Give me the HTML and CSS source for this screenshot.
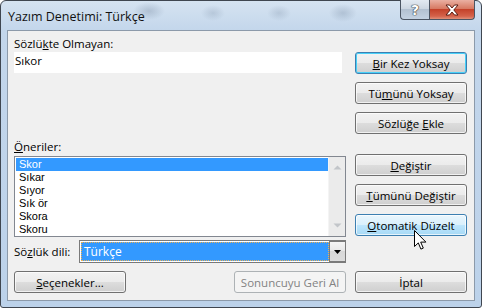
FILE: index.html
```html
<!DOCTYPE html>
<html lang="tr">
<head>
<meta charset="utf-8">
<title>Yazım Denetimi: Türkçe</title>
<link rel="stylesheet" href="styles.css">
</head>
<body>
<div class="window">
  <div class="titlebar">
    <span class="title">Yazım Denetimi: Türkçe</span>
    <div class="caption-btns">
      <div class="cap help">?</div>
      <div class="cap close">
        <svg width="16" height="12" viewBox="0 0 16 12"><path d="M2 1h3.5L8 4l2.5-3H14l-4.2 5 4.2 5h-3.5L8 8l-2.5 3H2l4.2-5z" fill="#fff" stroke="#5a1d12" stroke-width="1" stroke-linejoin="round"/></svg>
      </div>
    </div>
  </div>
  <div class="client">
    <div class="main">
      <div class="left">
        <div class="label">Sözlü<u>k</u>te Olmayan:</div>
        <div class="notin">Sıkor</div>
        <div class="label sugg-label"><u>Ö</u>neriler:</div>
        <div class="listbox">
          <ul class="items">
            <li class="sel">Skor</li>
            <li>Sıkar</li>
            <li>Sıyor</li>
            <li>Sık ör</li>
            <li>Skora</li>
            <li>Skoru</li>
          </ul>
          <div class="vscroll">
            <svg width="9" height="5" viewBox="0 0 9 5"><path d="M0.5 4.5L4.5 0.5 8.5 4.5z" fill="#c2c5c9"/></svg>
            <svg width="9" height="5" viewBox="0 0 9 5"><path d="M0.5 0.5L4.5 4.5 8.5 0.5z" fill="#c2c5c9"/></svg>
          </div>
        </div>
        <div class="langrow">
          <span class="label">Sö<u>z</u>lük dili:</span>
          <div class="combo">
            <div class="combo-field"><span class="combo-text">Türkçe</span></div>
            <div class="combo-btn"><svg width="7" height="4" viewBox="0 0 7 4"><path d="M0 0h7L3.5 4z" fill="#000"/></svg></div>
          </div>
        </div>
      </div>
      <div class="right">
        <button class="btn default"><u>B</u>ir Kez Yoksay</button>
        <button class="btn">Tü<u>m</u>ünü Yoksay</button>
        <button class="btn">Sözlüğe <u>E</u>kle</button>
        <button class="btn gap-top"><u>D</u>eğiştir</button>
        <button class="btn"><u>T</u>ümünü Değiştir</button>
        <button class="btn hover"><u>O</u>tomatik Düzelt</button>
      </div>
    </div>
    <div class="bottom">
      <div class="bottom-left">
        <button class="btn"><u>S</u>eçenekler...</button>
        <button class="btn" disabled>Sonuncuyu Geri Al</button>
      </div>
      <button class="btn">İptal</button>
    </div>
  </div>
  <svg class="cursor" width="13" height="21" viewBox="0 0 13 21"><path d="M0.5 0.5v16l3.8-3.6 2.6 6.2 2.4-1-2.6-6h5.2z" fill="#fff" stroke="#000" stroke-width="1" stroke-linejoin="round"/></svg>
</div>
</body>
</html>
```

FILE: styles.css
```css
* { box-sizing: border-box; }
html, body { margin: 0; padding: 0; }
body {
  width: 482px;
  height: 308px;
  overflow: hidden;
  background: #fff;
  font-family: "Open Sans", "Noto Sans", sans-serif;
  font-size: 11.5px;
  color: #000;
}
u { text-decoration: underline; text-underline-offset: 1px; }

.window {
  position: relative;
  width: 482px;
  height: 308px;
  border: 1px solid #3f4650;
  border-radius: 6px 6px 3px 3px;
  background:
    radial-gradient(ellipse 16px 9px at 148px 10px, rgba(100,120,145,0.3), transparent),
    radial-gradient(ellipse 12px 8px at 212px 12px, rgba(100,120,145,0.22), transparent),
    radial-gradient(ellipse 12px 8px at 278px 12px, rgba(100,120,145,0.22), transparent),
    radial-gradient(ellipse 14px 9px at 342px 12px, rgba(100,120,145,0.28), transparent),
    linear-gradient(#d5e3f1, #c3d6eb 30px, #bcd2ea);
  display: flex;
  flex-direction: column;
}

.titlebar {
  height: 29px;
  display: flex;
  align-items: flex-start;
}
.title {
  padding: 7px 0 0 7px;
  font-size: 12.5px;
  color: #111;
}
.caption-btns {
  margin-left: auto;
  margin-right: 6px;
  margin-top: -1px;
  display: flex;
  height: 20px;
}
.cap {
  height: 20px;
  border: 1px solid #4b5563;
  border-top: none;
  display: flex;
  align-items: center;
  justify-content: center;
}
.help {
  width: 29px;
  border-radius: 0 0 0 4px;
  border-right: none;
  background: linear-gradient(#e3eaf2, #cdd7e2 45%, #b3c1d1 50%, #c4d2e2);
  color: #fff;
  font-weight: bold;
  font-size: 14px;
  font-family: "DejaVu Sans", sans-serif;
  text-shadow: 0 0 1px #333, 0 0 1px #333, 0 0 1px #333;
}
.close {
  width: 46px;
  border-radius: 0 0 4px 0;
  background: linear-gradient(#eab0a2, #d77a63 45%, #c4422a 50%, #d5624a 85%, #e0917a);
}

.client {
  margin-left: 6px;
  width: 468px;
  height: 271px;
  border: 1px solid #8c9aaa;
  background: #f0f0f0;
  padding: 5px 6px 0 6px;
  display: flex;
  flex-direction: column;
}

.main {
  display: grid;
  grid-template-columns: 332px 112px;
  column-gap: 9px;
  align-items: start;
}

.left { display: flex; flex-direction: column; }
.label { height: 16px; line-height: 16px; white-space: nowrap; }
.notin {
  height: 21px;
  width: 328px;
  background: #fff;
  line-height: 18px;
  padding-left: 1px;
}
.sugg-label { margin-top: 66px; }

.listbox {
  margin-top: 1px;
  height: 81px;
  border: 1px solid #828790;
  background: #fff;
  display: flex;
  padding: 1px 0 1px 1px;
}
.items {
  list-style: none;
  margin: 0;
  padding: 0;
  flex: 1;
}
.items li {
  height: 13px;
  line-height: 13px;
  padding-left: 3px;
  font-family: "Liberation Sans", Arial, sans-serif;
  font-size: 11px;
  overflow: hidden;
}
.items li.sel { background: #3399ff; color: #fff; }
.vscroll {
  width: 17px;
  margin: -1px 0 -1px 0;
  background: #ebebeb;
  border-left: 1px solid #f4f4f4;
  display: flex;
  flex-direction: column;
  justify-content: space-between;
  align-items: center;
  padding: 8px 0 8px 0;
}

.langrow {
  margin-top: 3px;
  display: flex;
  align-items: center;
  justify-content: space-between;
  height: 23px;
}
.combo {
  width: 267px;
  height: 23px;
  border: 1px solid #7a7a7a;
  background: #fff;
  display: flex;
  padding: 1px 0 1px 1px;
}
.combo-field {
  flex: 1;
  background: #3399ff;
  border: 1px dotted #f0b050;
  display: flex;
  align-items: center;
}
.combo-text { color: #fff; padding-left: 2px; font-size: 12px; }
.combo-btn {
  width: 17px;
  margin: -1px -1px -1px 0;
  border: 1px solid #7a7a7a;
  background: linear-gradient(#f4f4f4, #e6e6e6 50%, #d8d8d8 50%, #dcdcdc);
  display: flex;
  align-items: center;
  justify-content: center;
}

.right {
  margin-top: 16px;
  display: flex;
  flex-direction: column;
  gap: 8px;
}
.gap-top { margin-top: 12px; }

.btn {
  font: inherit;
  color: #000;
  width: 112px;
  height: 22px;
  padding: 0;
  border: 1px solid #707070;
  border-radius: 3px;
  background: linear-gradient(#f2f2f2, #ebebeb 50%, #dddddd 50%, #cfcfcf);
  box-shadow: inset 0 0 0 1px rgba(255,255,255,0.7);
  line-height: 19px;
  text-align: center;
  white-space: nowrap;
}
.btn.default {
  border-color: #3c7fb1;
  box-shadow: inset 0 0 0 1px #48d0f8;
}
.btn.hover {
  border-color: #3c7fb1;
  background: linear-gradient(#eaf6fd, #d9f0fc 50%, #bee6fd 50%, #a7d9f5);
}
.btn:disabled {
  color: #838383;
  border-color: #adb2b5;
  background: #f4f4f4;
  box-shadow: none;
}

.bottom {
  margin-top: 8px;
  display: grid;
  grid-template-columns: 332px 112px;
  column-gap: 9px;
}
.bottom-left {
  display: flex;
  justify-content: space-between;
}

.cursor {
  position: absolute;
  left: 413px;
  top: 229px;
}
```
